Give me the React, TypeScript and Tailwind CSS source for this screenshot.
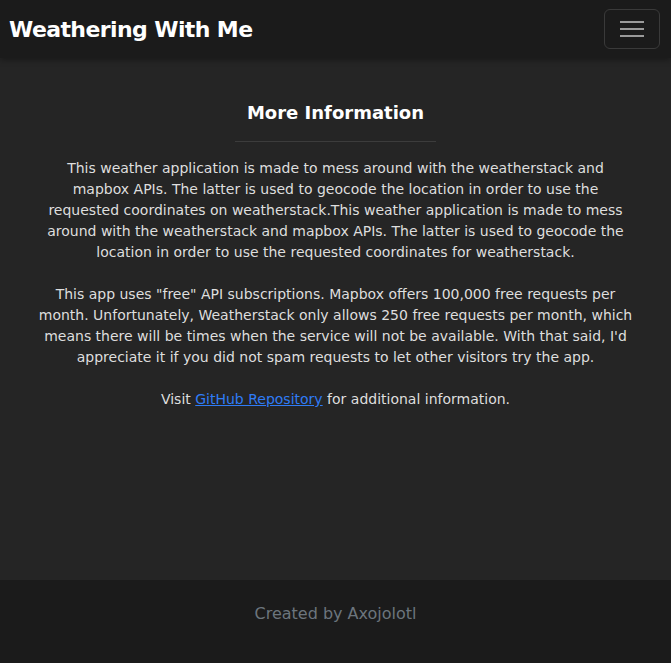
export default function App() {
  return (
    <div className="flex min-h-[663px] flex-col bg-[#252525] font-['DejaVu_Sans',sans-serif]">
      <nav className="flex h-[58px] items-center justify-between bg-[#1b1b1b] pl-[9px] pr-[11px] shadow-[0_2px_6px_rgba(0,0,0,0.35)]">
        <span className="text-[22px] font-bold tracking-[-0.6px] text-white">Weathering With Me</span>
        <button className="flex h-[40px] w-[56px] items-center justify-center rounded-md border border-[#3a3a3a]">
          <svg width="24" height="18" viewBox="0 0 24 18">
            <path d="M0 2h24M0 9h24M0 16h24" stroke="#9a9a9a" strokeWidth="2" />
          </svg>
        </button>
      </nav>

      <main className="flex flex-1 flex-col items-center pt-[41px]">
        <h2 className="text-[18px] font-semibold text-white">More Information</h2>
        <hr className="mt-[15px] w-[201px] border-t border-[#3c3c3c]" />
        <div className="mt-[16px] text-center text-[14px] leading-[21px] text-[#dedede]">
          <p>
            This weather application is made to mess around with the weatherstack and<br />
            mapbox APIs. The latter is used to geocode the location in order to use the<br />
            requested coordinates on weatherstack.This weather application is made to mess<br />
            around with the weatherstack and mapbox APIs. The latter is used to geocode the<br />
            location in order to use the requested coordinates for weatherstack.
          </p>
          <p className="mt-[21px]">
            This app uses "free" API subscriptions. Mapbox offers 100,000 free requests per<br />
            month. Unfortunately, Weatherstack only allows 250 free requests per month, which<br />
            means there will be times when the service will not be available. With that said, I'd<br />
            appreciate it if you did not spam requests to let other visitors try the app.
          </p>
          <p className="mt-[21px]">
            Visit{" "}
            <a href="#" className="text-[#2f7cf6] underline">
              GitHub Repository
            </a>{" "}
            for additional information.
          </p>
        </div>
      </main>

      <footer className="flex h-[83px] justify-center bg-[#1b1b1b] pt-[22px]">
        <span className="text-[16px] text-[#6c757d]">Created by Axojolotl</span>
      </footer>
    </div>
  );
}
